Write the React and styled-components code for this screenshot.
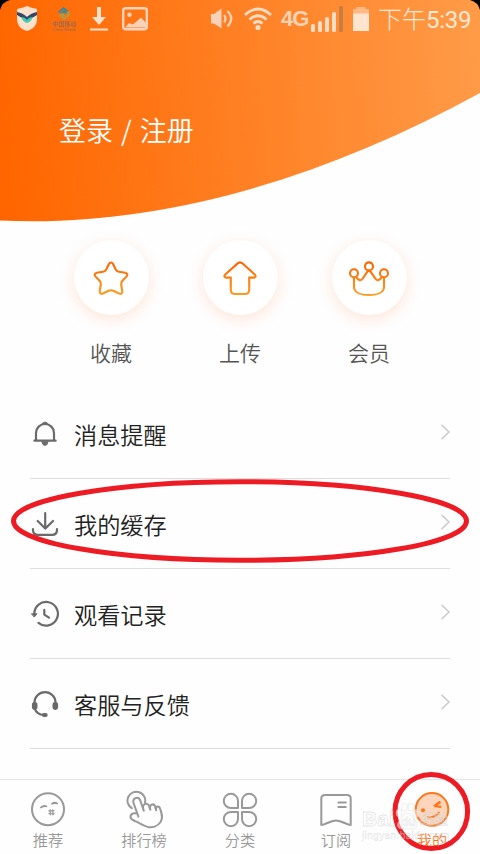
import styled, { createGlobalStyle } from 'styled-components';

const quickItems = [
    { label: '收藏', icon: 'star' },
    { label: '上传', icon: 'upload' },
    { label: '会员', icon: 'crown' },
];

const menuItems = [
    { label: '消息提醒', icon: 'bell' },
    { label: '我的缓存', icon: 'download' },
    { label: '观看记录', icon: 'history' },
    { label: '客服与反馈', icon: 'headset' },
];

const tabItems = [
    { label: '推荐', icon: 'face' },
    { label: '排行榜', icon: 'hand' },
    { label: '分类', icon: 'clover' },
    { label: '订阅', icon: 'bookmark' },
    { label: '我的', icon: 'mine', active: true },
];

const quickPaths = {
    star: <path d="M-2.1 -14 Q0 -17 2.1 -14 L4.6 -8.8 Q5.8 -6.5 8 -6.2 L14.2 -5.3 Q17.8 -4.2 15.4 -1.4 L11.4 2.8 Q9.8 4.6 10.2 6.8 L11.3 13 Q11.3 16.8 8 15.5 L2.4 12.8 Q0 11.8 -2.4 12.8 L-8 15.5 Q-11.3 16.8 -11.3 13 L-10.2 6.8 Q-9.8 4.6 -11.4 2.8 L-15.4 -1.4 Q-17.8 -4.2 -14.2 -5.3 L-8 -6.2 Q-5.8 -6.5 -4.6 -8.8 Z" />,
    upload: <path d="M-2.6 -14.4 Q0 -16.8 2.6 -14.4 L15 -3.2 Q16.6 -.7 14 -.4 H9.2 V11.4 Q9.2 16 4.8 16 H-4.8 Q-9.2 16 -9.2 11.4 V-.4 H-14 Q-16.6 -.7 -15 -3.2 Z" />,
    crown: (
        <>
            <circle cx="0" cy="-11.6" r="4" />
            <circle cx="-15" cy="-4.7" r="4" />
            <circle cx="15" cy="-4.7" r="4" />
            <path d="M-15 -.5 V9.5 C-14.5 14.5 -8 17 0 17 C8 17 14.5 14.5 15 9.5 V-.5" />
            <path d="M-13 -1.2 C-10.5 2.6 -8 3.4 -6 .2 L-1.8 -6.2 Q0 -8 1.8 -6.2 L6 .2 C8 3.4 10.5 2.6 13 -1.2" />
        </>
    ),
};

const menuPaths = {
    bell: (
        <>
            <path d="M-9 6 V-1 A9 9 0 0 1 9 -1 V6" />
            <path d="M-10.6 6.7 H10.6" />
            <path d="M-3 -10 Q-2.5 -12 0 -12 Q2.5 -12 3 -10 Z M-3.2 7.4 H3.2 Q2.8 11.4 0 11.4 Q-2.8 11.4 -3.2 7.4 Z" fill="currentColor" strokeWidth="0.6" />
        </>
    ),
    download: (
        <>
            <path d="M.2 -11 V4.5 M-7.3 -3 L.2 4.6 L8 -3" />
            <path d="M-12 5 V6.5 Q-11.5 10.8 -7.5 10.8 H7.5 Q11.5 10.8 12 6.5 V5" />
        </>
    ),
    history: (
        <>
            <path d="M-10.7 0 A11.8 11.8 0 1 1 -6.5 8.8" />
            <path d="M-.7 -4.2 V.6 L4 3.6" />
            <path d="M-13.2 -.2 L-8 -.2 L-10.6 2.8 Z" fill="currentColor" strokeWidth="1" />
        </>
    ),
    headset: (
        <>
            <path d="M-10.6 0 V-1.2 A10.6 10.6 0 0 1 10.6 -1.2 V0 M-10.6 4 C-9 9 -5.5 10.8 -1 11" />
            <rect x="-12" y="-.8" width="3.4" height="5.6" rx="1.7" fill="currentColor" />
            <rect x="8.6" y="-.8" width="3.4" height="5.6" rx="1.7" fill="currentColor" />
            <rect x="-2" y="10" width="3.6" height="1.800" rx=".9" fill="currentColor" />
        </>
    ),
};

const tabPaths = {
    face: (
        <>
            <circle cx="0" cy="-.8" r="16" />
            <path d="M-7.2 -2.400 Q-4.6 -5.400 -1.400 -3.600 Q-4.400 -4 -7.200 -2.400 Z M3.800 -6.200 Q6.400 -8.600 9.400 -6.400 Q6.400 -7 3.800 -6.200 Z" fill="currentColor" strokeWidth="1.5" />
            <path d="M1 1 L6 .6 M1 3.600 L6 3.800 M2.200 -.2 L2.400 4.800 M4.800 -.2 L5 4.800" strokeWidth="1.300" />
        </>
    ),
    hand: (
        <>
            <path d="M-12.2 -1.8 A8.9 8.9 0 1 1 1 -7.2" />
            <path d="M-5.6 6.6 L-10.6 -7.3 C-11.6 -12.8 -5.2 -13.8 -3.7 -9.4 L-.8 -1.2 C-1.8 -6.4 3.8 -8.2 5.2 -3.8 L6 -1.4 C5.4 -6.2 10.2 -7 11.2 -3.2 L12 -.6 C11.8 -4.4 15.2 -4.6 16.2 -1.2 C18 4 19.2 8 16.6 12 C14 15.6 9 18.1 3.6 16.9 C-1.5 15.6 -4.2 13.2 -8.2 11.4 C-11 10.2 -13.4 9.6 -13.5 7 C-13.5 3.2 -9.2 2.6 -7 3.6" />
            <path d="M-1.2 -2.2 L-.2 .8 M5.600 -2.8 L6.400 -.2 M11.600 -1.8 L12.200 .2" />
        </>
    ),
    clover: (
        <>
            <path d="M-2 -2 H-9.1 A7.1 7.1 0 1 1 -2 -9.1 Z" />
            <path d="M2 -2 V-9.1 A7.1 7.1 0 1 1 9.1 -2 Z" />
            <path d="M-2 2 V9.1 A7.1 7.1 0 1 1 -9.1 2 Z" />
            <path d="M2 2 H9.1 A7.1 7.1 0 1 1 2 9.1 Z" />
        </>
    ),
    bookmark: (
        <>
            <path d="M-14.7 15 V-11.4 Q-14.7 -15 -11 -15 H11 Q14.7 -15 14.7 -11.4 V15 C10.5 15 6 10.4 0 10.4 C-6 10.4 -10.5 15 -14.7 15 Z" />
            <path d="M2.4 -7.6 H9.8 M2.4 -3 H9.8" />
        </>
    ),
    mine: (
        <>
            <circle cx="0" cy="-.6" r="16.3" fill="#ffd6bb" />
            <circle cx="-9" cy=".2" r="2" fill="currentColor" stroke="none" />
            <path d="M7.6 -7.6 L2.8 -4.2 L8.2 -3.2" strokeWidth="2.6" />
            <path d="M-4 7 Q3.6 8.2 6.8 2.6" />
        </>
    ),
};

const StatusBar = () => (
    <StatusRow>
        <StatusGroup>
            <svg width="22" height="28" viewBox="0 0 22 28">
                <path d="M1 4 Q7 3 11 1 Q15 3 21 4 V14 C21 20 17 24.5 11 26 C5 24.5 1 20 1 14 Z" fill="#ffe0cb" />
                <path d="M1 7 Q7 8 11 12 Q15 8 21 7 V10 L11 16 L1 10 Z" fill="#33466c" />
                <path d="M5 12 Q9 12 11 15 Q13 12 17 12 Q15 17 11 18 Q7 17 5 12 Z" fill="#43cbb3" />
            </svg>
            <Carrier>
                <svg width="14" height="13" viewBox="0 0 14 13" fill="none" strokeWidth="1.8">
                    <path d="M1.500 5.500 L6.500 1.200 L11 4.800 M4 6.800 L7 4.300 L9.500 6.500" stroke="#348aa0" />
                    <path d="M2.500 7.500 L7 11.700 L12.500 7 L10 5 M4.500 6.500 L7 8.800" stroke="#a7a04a" />
                </svg>
                <CarrierName>中国移动</CarrierName>
                <CarrierSub>China Mobile</CarrierSub>
            </Carrier>
            <svg width="18" height="24" viewBox="0 0 18 24" fill="#ffe0cb">
                <path d="M7 0 H11 V10 H16 L9 18 L2 10 H7 Z M0 21.5 H18 V23.5 H0 Z" />
            </svg>
            <svg width="26" height="24" viewBox="0 0 26 24">
                <rect x="1.2" y="1.2" width="23.6" height="21" rx="2.5" fill="none" stroke="#f8d3bb" strokeWidth="2.4" />
                <circle cx="7.5" cy="7.8" r="2.3" fill="#f8d3bb" />
                <path d="M3 20.5 L7 16 L11 17.5 L19 10.5 L24 16 V20.5 Z" fill="#f8d3bb" />
            </svg>
        </StatusGroup>
        <StatusGroup $right>
            <svg width="24" height="22" viewBox="0 0 24 22" fill="none" stroke="#f6d2b8" strokeWidth="2.2">
                <path d="M-1 6 H3 L10.500 .500 V20.500 L3 15.500 H-1 Z" fill="#f6d2b8" stroke="none" />
                <path d="M13 7 Q16 10.500 13 14.500 M16.500 3 Q24 10.500 16.500 18.500" />
            </svg>
            <svg width="28" height="24" viewBox="0 0 28 24" fill="none" stroke="#fbdcc3" strokeWidth="2.8">
                <path d="M1 8 Q14 -4 27 8 M5.5 12.5 Q14 5 22.5 12.5 M9.5 16.5 Q14 12.5 18.5 16.5" />
                <circle cx="14" cy="20.5" r="2.6" fill="#fbdcc3" stroke="none" />
            </svg>
            <Signal>
                <Network>4G</Network>
                <svg width="34" height="27" viewBox="0 0 34 27" fill="#ffdcc2">
                    <rect x="1" y="18" width="4" height="8" rx="1.5" />
                    <rect x="8" y="15" width="4" height="11" rx="1.5" />
                    <rect x="15" y="11" width="4" height="15" rx="1.5" />
                    <rect x="22" y="6" width="4" height="20" rx="1.5" />
                    <rect x="29" y="0" width="4" height="26" rx="1.5" fill="#c87d43" />
                </svg>
            </Signal>
            <svg width="16" height="24" viewBox="0 0 16 24">
                <path d="M3.5 0 H12.5 V2 H16 V7 H0 V2 H3.5 Z" fill="#ffb985" />
                <path d="M0 6.5 H16 V24 H0 Z" fill="#ffe4cf" />
            </svg>
            <Clock>
                下午<ClockDigits>5:39</ClockDigits>
            </Clock>
        </StatusGroup>
    </StatusRow>
);

const App = () => {
    return (
        <>
            <GlobalStyle />
            <Screen>
                <Header>
                    <HeaderCurve viewBox="0 0 480 224">
                        <defs>
                            <linearGradient id="sunset" gradientUnits="userSpaceOnUse" x1="0" y1="30" x2="480" y2="0">
                                <stop offset="0" stopColor="#ff6600" />
                                <stop offset="1" stopColor="#ff9b48" />
                            </linearGradient>
                        </defs>
                        <path d="M0 0 H480 V93 C325 178 160 228 0 220.5 Z" fill="url(#sunset)" />
                        <path d="M0 0 H10 Q2 2 0 10 Z M480 0 H470 Q478 2 480 10 Z" fill="#000" />
                    </HeaderCurve>
                    <StatusBar />
                    <LoginText>登录 / 注册</LoginText>
                </Header>

                <QuickNav>
                    {quickItems.map(({ label, icon }) => (
                        <QuickItem key={icon}>
                            <QuickCircle>
                                <svg width="42" height="42" viewBox="-21 -21 42 42" fill="none" stroke="url(#flame)" strokeWidth="2.1" strokeLinejoin="round" strokeLinecap="round">
                                    <defs>
                                        <linearGradient id="flame" gradientUnits="userSpaceOnUse" x1="0" y1="-16" x2="0" y2="17">
                                            <stop offset="0" stopColor="#ff6200" />
                                            <stop offset="1" stopColor="#ff9c20" />
                                        </linearGradient>
                                    </defs>
                                    {quickPaths[icon]}
                                </svg>
                            </QuickCircle>
                            <QuickLabel>{label}</QuickLabel>
                        </QuickItem>
                    ))}
                </QuickNav>

                <Menu>
                    {menuItems.map(({ label, icon }) => (
                        <MenuRow key={icon}>
                            <MenuIcon viewBox="-15 -15 30 30">{menuPaths[icon]}</MenuIcon>
                            <MenuLabel>{label}</MenuLabel>
                            <Chevron viewBox="0 0 10 16">
                                <path d="M2 1.2 L9 8 L2 14.8" />
                            </Chevron>
                        </MenuRow>
                    ))}
                </Menu>

                <TabBar>
                    {tabItems.map(({ label, icon, active }) => (
                        <Tab key={icon} $active={active}>
                            <TabIcon viewBox="-20 -20 40 40">{tabPaths[icon]}</TabIcon>
                            <TabLabel>{label}</TabLabel>
                        </Tab>
                    ))}
                </TabBar>

                <Marks viewBox="0 0 480 854">
                    <ellipse cx="240" cy="521" rx="226.5" ry="39.3" />
                    <ellipse cx="431.3" cy="811.5" rx="36.3" ry="37" />
                </Marks>

                <Watermark>
                    <WatermarkLogo>
                        <span>Bai</span>
                        <svg width="25" height="28" viewBox="0 0 25 28" fill="#fff" fillOpacity="0.5" stroke="#ccc" strokeOpacity="0.35">
                            <ellipse cx="4" cy="11" rx="3" ry="4" />
                            <ellipse cx="9.5" cy="5" rx="3" ry="4" />
                            <ellipse cx="16" cy="5" rx="3" ry="4" />
                            <ellipse cx="21" cy="11.5" rx="3" ry="4" />
                            <path d="M12.5 11 C17 11 17 16 20 18 C24 22 22 27 18 27 C14 27 12 26 7 27 C2 27 1 22 4 19 C8 16 8 11 12.5 11 Z" />
                            <text x="6" y="24" fontSize="12" fontWeight="700">du</text>
                        </svg>
                        <WatermarkName>经验</WatermarkName>
                    </WatermarkLogo>
                    <WatermarkUrl>jingyan.baidu.com</WatermarkUrl>
                </Watermark>
            </Screen>
        </>
    );
};

export default App;

const GlobalStyle = createGlobalStyle`
    * {
        box-sizing: border-box;
    }

    body {
        margin: 0;
        background: #fff;
        font-family: "Noto Sans CJK SC", sans-serif;
        font-weight: 350;
    }

    svg {
        display: block;
        flex-shrink: 0;
    }
`;

const Screen = styled.div`
    position: relative;
    display: flex;
    flex-direction: column;
    width: 480px;
    height: 854px;
    overflow: hidden;
    background: #fefefe;
`;

const Header = styled.header`
    position: relative;
    height: 224px;
`;

const HeaderCurve = styled.svg`
    position: absolute;
    top: 0;
    left: 0;
    width: 480px;
    height: 224px;
`;

const StatusRow = styled.div`
    position: relative;
    display: flex;
    justify-content: space-between;
    align-items: center;
    height: 38px;
    padding: 0 9px 0 16px;
`;

const StatusGroup = styled.div`
    display: flex;
    align-items: center;
    gap: ${({ $right }) => ($right ? '9px' : '14px')};
`;

const Carrier = styled.div`
    display: flex;
    flex-direction: column;
    align-items: center;
    width: 24px;
    white-space: nowrap;
    color: #946956;
`;

const CarrierName = styled.span`
    font-size: 6px;
    font-weight: 500;
    line-height: 7px;
`;

const CarrierSub = styled.span`
    font-family: "Liberation Sans", sans-serif;
    font-size: 4px;
    line-height: 5px;
`;

const Signal = styled.div`
    display: flex;
    align-items: center;
`;

const Network = styled.span`
    width: 29px;
    font-family: "Liberation Sans", sans-serif;
    font-size: 22px;
    font-weight: 700;
    letter-spacing: -1px;
    line-height: 26px;
    color: #fbd3b4;
`;

const Clock = styled.span`
    width: 93px;
    font-size: 24px;
    font-weight: 300;
    line-height: 30px;
    white-space: nowrap;
    color: #ffe8d6;
`;

const ClockDigits = styled.span`
    font-family: Roboto, sans-serif;
    font-weight: 400;
    letter-spacing: -0.3px;
`;

const LoginText = styled.h1`
    position: relative;
    margin: 72px 0 0 59px;
    font-size: 27px;
    font-weight: 350;
    line-height: 40px;
    word-spacing: 2px;
    color: #fff;
`;

const QuickNav = styled.nav`
    display: flex;
    justify-content: space-between;
    height: 165px;
    padding: 16px 73px 0;
`;

const QuickItem = styled.div`
    display: flex;
    flex-direction: column;
    align-items: center;
    width: 76px;
`;

const QuickCircle = styled.div`
    display: flex;
    align-items: center;
    justify-content: center;
    width: 75px;
    height: 75px;
    border-radius: 50%;
    background: #fff;
    box-shadow: 0 4px 16px rgba(255, 102, 20, 0.16);
`;

const QuickLabel = styled.span`
    margin-top: 21px;
    font-size: 21px;
    line-height: 32px;
    color: #555;
`;

const Menu = styled.ul`
    flex: 1;
    margin: 0;
    padding: 0 30px;
    list-style: none;
`;

const MenuRow = styled.li`
    display: flex;
    align-items: center;
    height: 90px;
    border-bottom: 1px solid #dedede;
`;

const MenuIcon = styled.svg`
    width: 30px;
    height: 30px;
    fill: none;
    stroke: currentColor;
    stroke-width: 2.2;
    stroke-linecap: round;
    stroke-linejoin: round;
    color: #6a6a6a;
`;

const MenuLabel = styled.span`
    flex: 1;
    margin-left: 14px;
    font-size: 23.2px;
    line-height: 36px;
    color: #222;
`;

const Chevron = styled.svg`
    width: 10px;
    height: 16px;
    margin-bottom: 4px;
    fill: none;
    stroke: #c7c8cc;
    stroke-width: 1.5;
    stroke-linecap: round;
`;

const TabBar = styled.nav`
    display: flex;
    height: 75px;
    border-top: 1px solid #e5e5e5;
`;

const Tab = styled.div`
    display: flex;
    flex: 1;
    flex-direction: column;
    align-items: center;
    padding-top: 10px;
    color: ${({ $active }) => ($active ? '#ff751a' : '#999')};
`;

const TabIcon = styled.svg`
    width: 40px;
    height: 40px;
    fill: none;
    stroke: currentColor;
    stroke-width: 2;
    stroke-linecap: round;
    stroke-linejoin: round;
`;

const TabLabel = styled.span`
    margin-top: -1px;
    font-size: 15.2px;
    line-height: 20px;
`;

const Marks = styled.svg`
    position: absolute;
    top: 0;
    left: 0;
    width: 480px;
    height: 854px;
    fill: none;
    stroke: #ed1c24;
    stroke-width: 5;
    pointer-events: none;
`;

const Watermark = styled.div`
    position: absolute;
    top: 800px;
    left: 362px;
    width: 92px;
    font-family: "Liberation Sans", "Noto Sans CJK SC", sans-serif;
    font-weight: 700;
    color: rgba(255, 255, 255, 0.35);
    -webkit-text-stroke: 0.8px rgba(190, 190, 190, 0.4);
    pointer-events: none;
`;

const WatermarkLogo = styled.div`
    display: flex;
    align-items: flex-end;
    height: 30px;
    font-size: 21px;
    line-height: 22px;
`;

const WatermarkName = styled.span`
    font-size: 14px;
    white-space: nowrap;
`;

const WatermarkUrl = styled.div`
    font-size: 10px;
    font-weight: 400;
    letter-spacing: 0.4px;
    line-height: 12px;
    white-space: nowrap;
    -webkit-text-stroke-width: 0.5px;
`;
